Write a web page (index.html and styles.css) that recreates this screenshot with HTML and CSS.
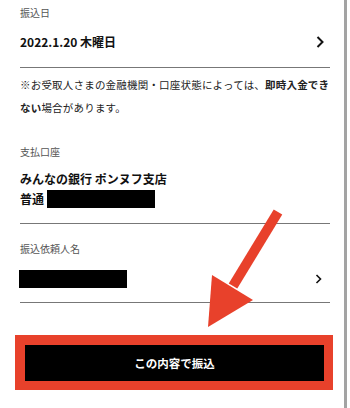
FILE: index.html
```html
<!DOCTYPE html>
<html lang="ja">
  <head>
    <meta charset="UTF-8" />
    <meta name="viewport" content="width=device-width, initial-scale=1.0" />
    <title>振込内容の確認</title>
    <link rel="stylesheet" href="styles.css">
  </head>
  <body>
    <div class="screen">
      <div class="page">
        <div class="field">
          <div class="label">振込日</div>
          <div class="row date-row">
            <span class="value">2022.1.20 木曜日</span>
            <svg class="chevron" width="8" height="12" viewBox="0 0 8 12">
              <polyline points="1.5,1 6.5,6 1.5,11" fill="none" stroke="#111" stroke-width="2" />
            </svg>
          </div>
        </div>

        <p class="note">※お受取人さまの金融機関・口座状態によっては、<b>即時入金できない</b>場合があります。</p>

        <div class="field account">
          <div class="label">支払口座</div>
          <div class="value bank">みんなの銀行 ポンヌフ支店</div>
          <div class="value bank">普通 <span class="redact"></span></div>
        </div>

        <div class="field requester">
          <div class="label">振込依頼人名</div>
          <div class="row">
            <span class="redact"></span>
            <svg class="chevron small" width="7" height="10" viewBox="0 0 7 10">
              <polyline points="1.5,1 5.5,5 1.5,9" fill="none" stroke="#111" stroke-width="1.6" />
            </svg>
          </div>
        </div>

        <div class="highlight">
          <button class="submit">この内容で振込</button>
        </div>
      </div>
      <div class="scrollbar"></div>

      <!-- 注釈の矢印 -->
      <svg class="arrow" width="350" height="408" viewBox="0 0 350 408">
        <line x1="278" y1="212" x2="233" y2="286" stroke="#e8412b" stroke-width="10" />
        <polygon points="208,327 212,275 253,300" fill="#e8412b" />
      </svg>
    </div>
  </body>
</html>
```

FILE: styles.css
```css
body {
  margin: 0;
  padding: 0;
  background-color: #fff;
  font-family: "Noto Sans CJK JP", "Noto Sans", sans-serif;
  color: #111;
}
.screen {
  position: relative;
  display: flex;
  width: 350px;
  height: 408px;
  overflow: hidden;
}
.page {
  width: 344px;
  box-sizing: border-box;
  padding: 5px 14px 0 20px;
}
.scrollbar {
  width: 3px;
  background-color: #a3a3a3;
}
.label {
  font-size: 10px;
  line-height: 16px;
  color: #555;
}
.value {
  font-size: 12px;
  font-weight: bold;
  line-height: 20px;
}
.row {
  display: flex;
  align-items: center;
  justify-content: space-between;
  height: 20px;
  padding-right: 6px;
}
.date-row {
  margin-top: 11px;
}
.field {
  border-bottom: 1px solid #777;
}
.field:first-child {
  padding-bottom: 15px;
}
.note {
  margin: 5px 0 0 0;
  font-size: 10.5px;
  letter-spacing: 0.2px;
  line-height: 23px;
  color: #222;
}
.account {
  margin-top: 25px;
  padding-bottom: 14px;
}
.account .label {
  margin-bottom: 9px;
}
.bank {
  display: flex;
  align-items: center;
  gap: 3px;
}
.redact {
  display: inline-block;
  width: 108px;
  height: 18px;
  background-color: #000;
}
.requester {
  margin-top: 17px;
  padding-bottom: 13px;
}
.requester .row {
  margin-top: 12px;
  padding-right: 8px;
}
.requester .redact {
  margin-left: -1px;
}
.highlight {
  margin: 32px 0 0 -5px;
  width: 318px;
  box-sizing: border-box;
  border: 10px solid #e8412b;
  border-right-width: 9px;
  border-bottom-width: 9px;
}
.submit {
  display: block;
  width: 100%;
  height: 36px;
  border: none;
  background-color: #000;
  color: #fff;
  font-family: "Noto Sans CJK JP", sans-serif;
  font-size: 11.5px;
  font-weight: bold;
}
.arrow {
  position: absolute;
  top: 0;
  left: 0;
  pointer-events: none;
}
```
